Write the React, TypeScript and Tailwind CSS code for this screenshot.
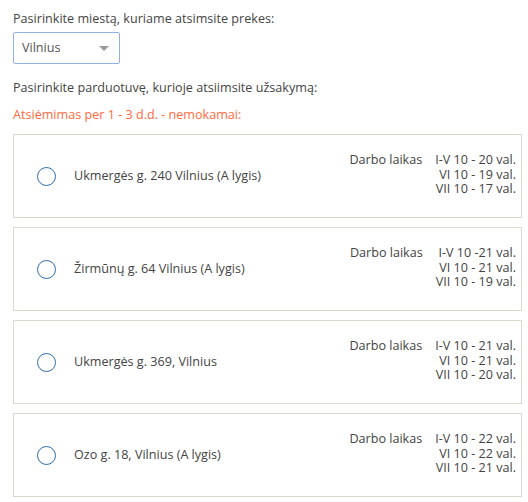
import React from "react";

const stores = [
  { name: "Ukmergės g. 240 Vilnius (A lygis)", hours: ["I-V 10 - 20 val.", "VI 10 - 19 val.", "VII 10 - 17 val."] },
  { name: "Žirmūnų g. 64 Vilnius (A lygis)", hours: ["I-V 10 -21 val.", "VI 10 - 21 val.", "VII 10 - 19 val."] },
  { name: "Ukmergės g. 369, Vilnius", hours: ["I-V 10 - 21 val.", "VI 10 - 21 val.", "VII 10 - 20 val."] },
  { name: "Ozo g. 18, Vilnius (A lygis)", hours: ["I-V 10 - 22 val.", "VI 10 - 22 val.", "VII 10 - 21 val."] },
];

export default function App() {
  return (
    <div
      className="w-[528px] h-[502px] bg-white pl-[13px] pr-[6px] pt-[9px] text-[12.6px] text-[#444]"
      style={{ fontFamily: '"Open Sans", "Liberation Sans", sans-serif' }}
    >
      <div className="leading-[20px]">Pasirinkite miestą, kuriame atsimsite prekes:</div>
      <div className="mt-[3px] w-[107px] h-[32px] border border-[#8fb1e8] rounded-[2px] flex items-center justify-between pl-[8px] pr-[10px]">
        <span className="text-[#555]">Vilnius</span>
        <span className="w-0 h-0 border-l-[5px] border-r-[5px] border-t-[5px] border-l-transparent border-r-transparent border-t-[#999]" />
      </div>
      <div className="mt-[14px] leading-[20px]">Pasirinkite parduotuvę, kurioje atsiimsite užsakymą:</div>
      <div className="mt-[7px] leading-[20px] text-[#ff6a3d]">Atsiėmimas per 1 - 3 d.d. - nemokamai:</div>
      <div className="mt-[9px] flex flex-col gap-[9px]">
        {stores.map((s) => (
          <div key={s.name} className="h-[84px] border border-[#dcdace] flex items-center pl-[23px] pr-[5px]">
            <span className="w-[19px] h-[19px] rounded-full border-[1.5px] border-[#2e6cb5] shrink-0 mt-[1px]" />
            <span className="ml-[18px] flex-1 mt-[1px]">{s.name}</span>
            <div className="flex leading-[14.5px] mt-[-2px]">
              <span>Darbo laikas</span>
              <div className="ml-[13px] flex flex-col items-end">
                {s.hours.map((h) => (
                  <span key={h}>{h}</span>
                ))}
              </div>
            </div>
          </div>
        ))}
      </div>
    </div>
  );
}
